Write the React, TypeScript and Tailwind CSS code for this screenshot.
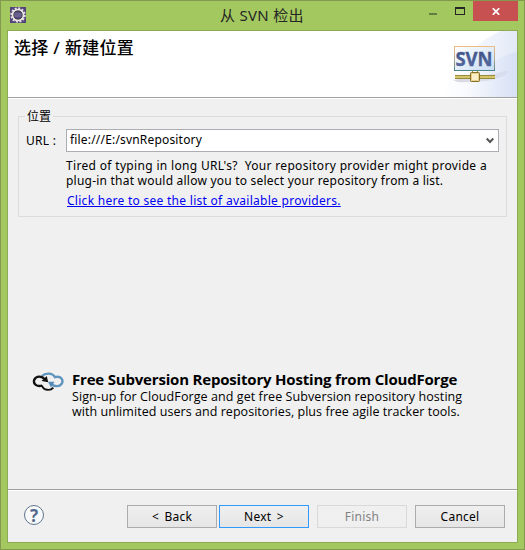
import React from "react";

const ui = "font-['Noto_Sans','Noto_Sans_CJK_SC',sans-serif]";

function GearIcon() {
  return (
    <svg width="16" height="16" viewBox="0 0 16 16">
      <rect width="16" height="16" fill="#54447c" />
      <circle cx="8" cy="8" r="6.7" fill="none" stroke="#e6e2e0" strokeWidth="2" strokeDasharray="2 1.508" />
      <circle cx="8" cy="8" r="5.3" fill="#4a3c70" stroke="#e9e5e2" strokeWidth="2" />
      <circle cx="8" cy="8" r="4.1" fill="#544a7c" stroke="#3b3640" strokeWidth="0.9" />
      <path d="M4.3 7h7.4M4.3 9h7.4" stroke="#8e86ad" strokeWidth="0.8" />
    </svg>
  );
}

function SvnBanner() {
  return (
    <svg width="75" height="66" viewBox="442 31 75 66" className="block">
      <defs>
        <linearGradient id="sky" x1="0" x2="1" y1="0" y2="0">
          <stop offset="0" stopColor="#ffffff" />
          <stop offset="0.4" stopColor="#f7f9fd" />
          <stop offset="1" stopColor="#e3e9f7" />
        </linearGradient>
        <linearGradient id="swoosh" x1="0" x2="1" y1="0" y2="0">
          <stop offset="0" stopColor="#eef2fb" stopOpacity="0" />
          <stop offset="1" stopColor="#d7e0f5" />
        </linearGradient>
        <linearGradient id="frame" x1="0" x2="0" y1="0" y2="1">
          <stop offset="0" stopColor="#edbd80" />
          <stop offset="0.5" stopColor="#b3aa92" />
          <stop offset="1" stopColor="#4e8588" />
        </linearGradient>
        <linearGradient id="panel" x1="0" x2="1" y1="0" y2="1">
          <stop offset="0" stopColor="#ffffff" />
          <stop offset="1" stopColor="#c8dcf3" />
        </linearGradient>
        <linearGradient id="letters" x1="0" x2="0" y1="0" y2="1">
          <stop offset="0" stopColor="#34497c" />
          <stop offset="1" stopColor="#5f70ab" />
        </linearGradient>
        <linearGradient id="shade" x1="0" x2="1" y1="0" y2="0">
          <stop offset="0" stopColor="#a9a6bd" stopOpacity="0.45" />
          <stop offset="1" stopColor="#c5c6dc" stopOpacity="0.25" />
        </linearGradient>
      </defs>
      <path d="M442 97C450 70 472 43 501 31H517V97Z" fill="url(#sky)" />
      <path d="M462 97C476 73 498 55 517 52V97Z" fill="url(#swoosh)" />
      <path d="M453 80L494 74C504 71 511 69 508 73C500 80 480 83 458 82Z" fill="url(#shade)" />
      <rect x="454.5" y="46.5" width="40" height="24" fill="url(#panel)" stroke="url(#frame)" />
      <text x="455.5" y="66.300" textLength="37" lengthAdjust="spacingAndGlyphs" fill="url(#letters)" stroke="#4a5e94" strokeWidth="0.4" className="font-['Open_Sans',sans-serif] text-[20px] font-bold">SVN</text>
      <path d="M472.500 71V73M477.500 71V73" stroke="#a89335" />
      <rect x="455" y="75" width="40" height="4" fill="#b5a44b" />
      <path d="M455 75.500H495M455 78.500H495" stroke="#998b37" />
      <path d="M455 77H495" stroke="#f2e78d" />
      <rect x="470.500" y="72.500" width="9" height="9" rx="0.8" fill="#fbefc9" stroke="#84702a" />
      <rect x="471.500" y="73.500" width="7" height="7" fill="none" stroke="#e2c878" strokeWidth="0.8" />
    </svg>
  );
}

function CloudIcon() {
  return (
    <svg width="32" height="20" viewBox="0 0 32 20" fill="none" className="block">
      <path d="M10 4C13 0.800 20.500 0.400 23 5.200C29 3.400 32 8.500 29.500 12C27.500 14.800 23 14.800 19.500 12.500" stroke="#5f94bd" strokeWidth="2.400" />
      <path d="M16 9.800L22.500 9.800L19 15.500Z" fill="#5289b7" />
      <path d="M13 7.500C10 3.800 4.500 3.400 2.300 7.600C0.700 12.200 5 15 10.200 13.600" stroke="#111" strokeWidth="2.400" />
      <path d="M10 13.500C11.500 18.700 18.500 19 21.300 15.700" stroke="#111" strokeWidth="1.900" />
      <path d="M9.500 9L16.200 10.300L14.800 4Z" fill="#111" />
    </svg>
  );
}

function DialogButton({ label, look = "border-[#acacac] text-black" }: { label: string; look?: string }) {
  return (
    <button className={`flex h-[23px] w-[90px] items-center justify-center whitespace-pre border bg-linear-to-b from-[#f0f0f0] to-[#e5e5e5] text-[12px] leading-none tracking-[0.25px] [word-spacing:2px] ${look}`}>
      {label}
    </button>
  );
}

export default function App() {
  return (
    <div className={`flex h-[550px] w-[525px] flex-col border border-[#82994f] bg-[#a4c860] px-[6px] pb-[6px] text-[12px] text-black ${ui}`}>
      <div className="relative flex h-[29px] shrink-0 items-start">
        <div className="ml-[3px] mt-[6px]"><GearIcon /></div>
        <h1 className="absolute left-[213px] top-[4px] whitespace-pre text-[15px] leading-[20px] tracking-[0.3px] text-[#252525]">从 SVN 检出</h1>
        <div className="ml-auto flex">
          <div className="mr-[18px] mt-[12px] h-[2px] w-[8px] bg-[#667b40]" />
          <div className="mr-[8px] mt-[6px] h-[8px] w-[10px] border border-t-2 border-[#252525]" />
          <div className="flex h-[20px] w-[45px] items-center justify-center bg-[#c75050]">
            <svg width="8" height="7" viewBox="0 0 8 7"><path d="M.8.200L7.200 6.800M7.200.200L.8 6.800" stroke="white" strokeWidth="1.700" /></svg>
          </div>
        </div>
      </div>
      <div className="flex grow flex-col border border-[#8dab53] bg-[#f0f0f0]">
        <header className="flex h-[67px] justify-between border-b border-[#a0a0a0] bg-white">
          <h2 className="ml-[6px] mt-[6px] whitespace-pre text-[17px] font-medium leading-[22px] tracking-[0.3px]">选择 / 新建位置</h2>
          <SvnBanner />
        </header>
        <div className="h-px bg-white" />
        <fieldset className="relative ml-[10px] mt-[17px] h-[101px] w-[489px] border border-[#dcdcdc]">
          <span className="absolute left-[6px] top-[-9px] bg-[#f0f0f0] px-[2px] text-[12px] leading-[18px]">位置</span>
          <div className="ml-[7px] mt-[12px] flex">
            <label className="w-[40px] whitespace-pre text-[12px] leading-[23px] tracking-[0.3px]">URL :</label>
            <div className="flex h-[23px] w-[433px] items-center justify-between border border-[#abadb3] bg-white pl-[3px] pr-[4px]">
              <span className="pb-px text-[12px] leading-none tracking-[0.18px]">file:///E:/svnRepository</span>
              <svg width="8" height="7" viewBox="0 0 8 7"><path d="M.7 1.500L4 5L7.300 1.500" fill="none" stroke="#555" strokeWidth="2" /></svg>
            </div>
          </div>
          <div className="ml-[47px] mt-[6px] whitespace-pre leading-[15px]">
            <div className="tracking-[0.33px]">Tired of typing in long URL's?  Your repository provider might provide a</div>
            <div className="tracking-[0.22px]">plug-in that would allow you to select your repository from a list.</div>
            <a className="ml-px mt-[5px] inline-block text-[#0000f0] tracking-[0.28px] underline underline-offset-1">Click here to see the list of available providers.</a>
          </div>
        </fieldset>
        <div className="ml-[24px] mt-[153px] flex font-['Open_Sans',sans-serif]">
          <div className="mt-[2px]"><CloudIcon /></div>
          <div className="ml-[8px] whitespace-pre text-[12.5px] leading-[15px]">
            <div className="text-[15px] font-bold leading-[19px] tracking-[-0.19px]">Free Subversion Repository Hosting from CloudForge</div>
            <div className="tracking-[0.08px]">Sign-up for CloudForge and get free Subversion repository hosting</div>
            <div className="tracking-[0.05px]">with unlimited users and repositories, plus free agile tracker tools.</div>
          </div>
        </div>
        <footer className="mt-auto flex h-[53px] border-t border-[#a0a0a0] shadow-[inset_0_1px_white]">
          <div className="ml-[16px] mt-[15px] flex size-[20px] items-center justify-center rounded-full border border-[#61738d] bg-[#f8f9fa] text-[17px] font-bold leading-none text-[#566a8b]">?</div>
          <div className="ml-[83px] mt-[15px] flex">
            <DialogButton label="< Back" />
            <div className="ml-[2px]"><DialogButton label="Next >" look="border-[#3399ff] text-black" /></div>
            <div className="ml-[8px]"><DialogButton label="Finish" look="border-[#d9d9d9] text-[#838383] from-[#efefef] to-[#efefef]" /></div>
            <div className="ml-[8px]"><DialogButton label="Cancel" /></div>
          </div>
        </footer>
      </div>
    </div>
  );
}
